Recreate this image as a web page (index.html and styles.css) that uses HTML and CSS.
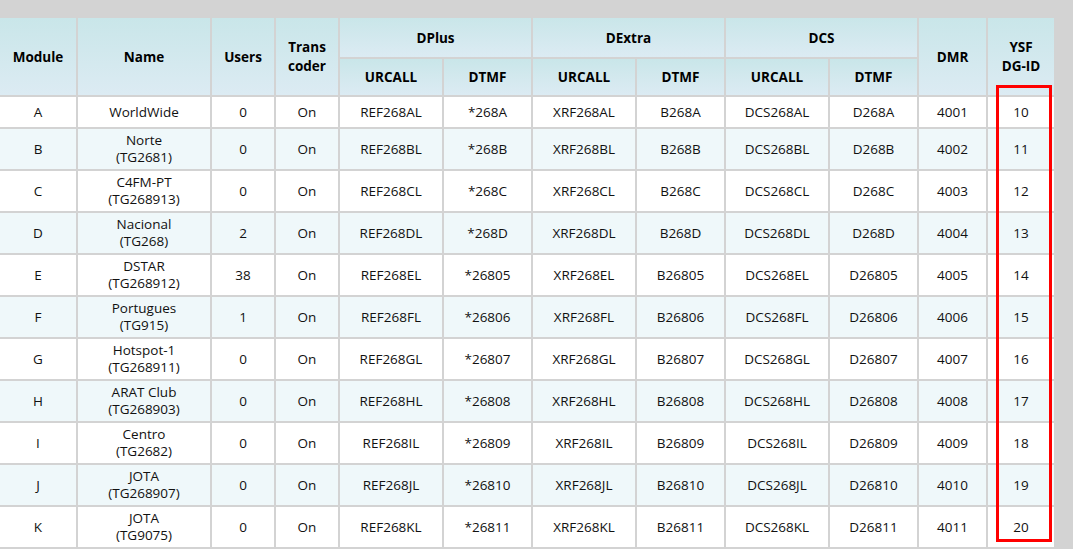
FILE: index.html
```html
<!DOCTYPE html>
<html>
<head>
<meta charset="utf-8">
<link rel="stylesheet" href="styles.css">
</head>
<body>
<div class="wrap">
<table class="grid">
<colgroup>
<col class="c-mod"><col class="c-name"><col class="c-users"><col class="c-trans">
<col class="c-ur"><col class="c-dt"><col class="c-ur"><col class="c-dt"><col class="c-ur"><col class="c-dt">
<col class="c-dmr"><col class="c-ysf">
</colgroup>
<thead>
<tr class="h1">
<th rowspan="2">Module</th><th rowspan="2">Name</th><th rowspan="2">Users</th><th rowspan="2">Trans<br>coder</th>
<th colspan="2">DPlus</th><th colspan="2">DExtra</th><th colspan="2">DCS</th>
<th rowspan="2">DMR</th><th rowspan="2">YSF<br>DG-ID</th>
</tr>
<tr class="h2">
<th>URCALL</th><th>DTMF</th><th>URCALL</th><th>DTMF</th><th>URCALL</th><th>DTMF</th>
</tr>
</thead>
<tbody>
<tr><td>A</td><td>WorldWide</td><td>0</td><td>On</td><td>REF268AL</td><td>*268A</td><td>XRF268AL</td><td>B268A</td><td>DCS268AL</td><td>D268A</td><td>4001</td><td>10</td></tr>
<tr><td>B</td><td>Norte<br>(TG2681)</td><td>0</td><td>On</td><td>REF268BL</td><td>*268B</td><td>XRF268BL</td><td>B268B</td><td>DCS268BL</td><td>D268B</td><td>4002</td><td>11</td></tr>
<tr><td>C</td><td>C4FM-PT<br>(TG268913)</td><td>0</td><td>On</td><td>REF268CL</td><td>*268C</td><td>XRF268CL</td><td>B268C</td><td>DCS268CL</td><td>D268C</td><td>4003</td><td>12</td></tr>
<tr><td>D</td><td>Nacional<br>(TG268)</td><td>2</td><td>On</td><td>REF268DL</td><td>*268D</td><td>XRF268DL</td><td>B268D</td><td>DCS268DL</td><td>D268D</td><td>4004</td><td>13</td></tr>
<tr><td>E</td><td>DSTAR<br>(TG268912)</td><td>38</td><td>On</td><td>REF268EL</td><td>*26805</td><td>XRF268EL</td><td>B26805</td><td>DCS268EL</td><td>D26805</td><td>4005</td><td>14</td></tr>
<tr><td>F</td><td>Portugues<br>(TG915)</td><td>1</td><td>On</td><td>REF268FL</td><td>*26806</td><td>XRF268FL</td><td>B26806</td><td>DCS268FL</td><td>D26806</td><td>4006</td><td>15</td></tr>
<tr><td>G</td><td>Hotspot-1<br>(TG268911)</td><td>0</td><td>On</td><td>REF268GL</td><td>*26807</td><td>XRF268GL</td><td>B26807</td><td>DCS268GL</td><td>D26807</td><td>4007</td><td>16</td></tr>
<tr><td>H</td><td>ARAT Club<br>(TG268903)</td><td>0</td><td>On</td><td>REF268HL</td><td>*26808</td><td>XRF268HL</td><td>B26808</td><td>DCS268HL</td><td>D26808</td><td>4008</td><td>17</td></tr>
<tr><td>I</td><td>Centro<br>(TG2682)</td><td>0</td><td>On</td><td>REF268IL</td><td>*26809</td><td>XRF268IL</td><td>B26809</td><td>DCS268IL</td><td>D26809</td><td>4009</td><td>18</td></tr>
<tr><td>J</td><td>JOTA<br>(TG268907)</td><td>0</td><td>On</td><td>REF268JL</td><td>*26810</td><td>XRF268JL</td><td>B26810</td><td>DCS268JL</td><td>D26810</td><td>4010</td><td>19</td></tr>
<tr><td>K</td><td>JOTA<br>(TG9075)</td><td>0</td><td>On</td><td>REF268KL</td><td>*26811</td><td>XRF268KL</td><td>B26811</td><td>DCS268KL</td><td>D26811</td><td>4011</td><td>20</td></tr>
</tbody>
</table>
<div class="highlight"></div>
</div>
</body>
</html>
```
FILE: styles.css
```css
html, body {
  margin: 0;
  padding: 0;
  background: #d3d3d3;
  overflow: hidden;
}
body {
  font-family: "Open Sans", "Noto Sans", sans-serif;
  font-size: 13.5px;
  color: #111;
}
.wrap {
  position: relative;
  padding-top: 16px;
  margin-left: -2px;
}
.grid {
  border-collapse: separate;
  border-spacing: 2px;
  table-layout: fixed;
  width: 1058px;
}
.c-mod { width: 76px; }
.c-name { width: 132px; }
.c-users { width: 62px; }
.c-trans { width: 62px; }
.c-ur { width: 102px; }
.c-dt { width: 87px; }
.c-dmr { width: 67px; }
.c-ysf { width: 66px; }
th {
  background: linear-gradient(#c9e6e9, #dcebf3);
  font-weight: 700;
  font-size: 13.5px;
  line-height: 19px;
  padding: 1px 0 0;
  text-align: center;
  color: #000;
}
.h1 th { height: 38px; }
.h2 th { height: 35px; }
td {
  background: #fff;
  text-align: center;
  padding: 3px 0;
  height: 24px;
  line-height: 17px;
  white-space: nowrap;
}
tbody tr:nth-child(even) td {
  background: #eff8fa;
}
.highlight {
  position: absolute;
  left: 998px;
  top: 85px;
  width: 50px;
  height: 451px;
  border: 3px solid #ff0000;
}
```
